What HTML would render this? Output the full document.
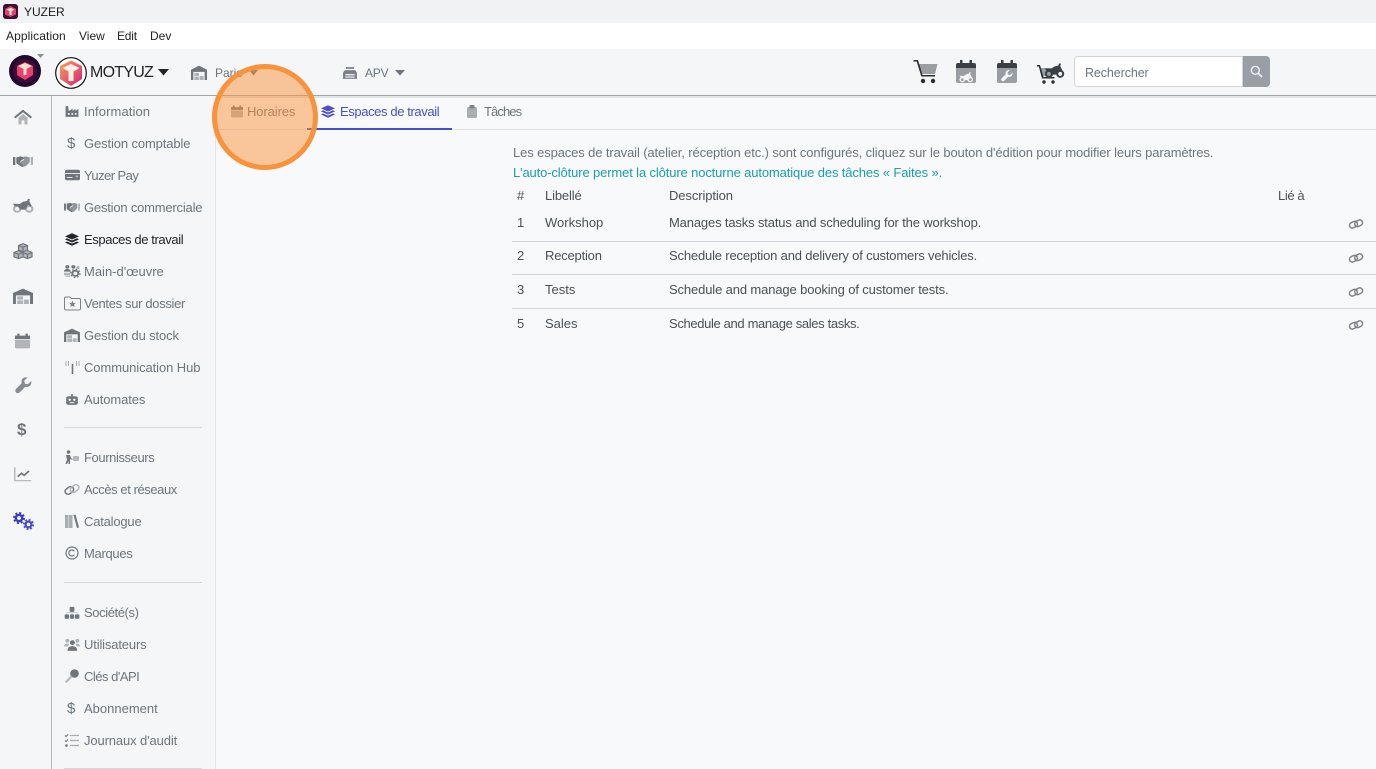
<!DOCTYPE html>
<html lang="fr"><head><meta charset="utf-8"><title>YUZER</title>
<style>
*{box-sizing:border-box}
html,body{margin:0;padding:0;width:1376px;height:769px;overflow:hidden;background:#f8f9fa;font-family:"Liberation Sans",sans-serif;font-size:13px;color:#495057}
.a{position:absolute;white-space:nowrap;line-height:18px}
.t{position:absolute;white-space:nowrap;line-height:18px;height:18px}
svg.i{position:absolute;overflow:visible;--d:#6f757b;--l:#b0b4b9;--b:#f4f6f8}
.s{color:#6c757d}
.hr{position:absolute;height:1px;background:#d5d8dc}
</style></head><body>
<svg width="0" height="0" style="position:absolute"><defs>
<g id="home"><path d="M6 13 12 7.500l6 5.500v10h-4v-6h-4v6H6z" fill="var(--l)"/><path d="M12 1 0 12l1.800 2L12 4.800 22.200 14l1.800-2z" fill="var(--d)"/></g>
<g id="hands"><path d="M0 6h2.800v12H0z" fill="var(--d)"/><path d="M21.200 6H24v12h-2.800z" fill="var(--l)"/><path d="M4 6.500 9 5l3 1 1 3-3 2-2 3 5 6-2 1-5-4-2-1.500z" fill="var(--d)"/><path d="M12 6l3-1 5 1.500V14l-5 6-2.500.5L8 15l2.500-3 3-1.500L12 6z" fill="var(--d)" opacity=".75"/></g>
<g id="moto"><circle cx="5" cy="16.500" r="3.800" fill="none" stroke="var(--l)" stroke-width="2.600"/><circle cx="19.500" cy="16.500" r="3.800" fill="none" stroke="var(--l)" stroke-width="2.600"/><path d="M0 9.500l8 .5 4-3 5-1 1-3 2.500.5-1 3 3 6-2 1-2.500-2.500-3 6.500H8.500L6 13H2z" fill="var(--d)"/></g>
<g id="cubes"><path d="M12 1l6 2.700v6.800L12 13.200 6 10.500V3.700zM6 11.500l6 2.700v6.600L6 23.500 0 20.800v-6.600zM18 11.500l6 2.700v6.600l-6 2.700-6-2.700v-6.600z" fill="var(--l)"/><path d="M12 1l6 2.700v6.800L12 13.200 6 10.500V3.700zM6 3.700l6 2.700 6-2.700M12 6.400v6.800M6 11.500l6 2.700v6.600L6 23.500 0 20.800v-6.600zM0 14.200l6 2.700 6-2.700M6 16.900v6.600M18 11.500l6 2.700v6.600l-6 2.700-6-2.700M12 14.200l6 2.700 6-2.700M18 16.900v6.600" fill="none" stroke="var(--d)" stroke-width="1.600"/></g>
<g id="ware"><path d="M0 7.500 12 1l12 6.500V24h-3.500V11h-17v13H0z" fill="var(--d)"/><path d="M5 12.500h7v5H5zM13 17.500h6V24h-6zM5 18.500h7V24H5z" fill="var(--l)"/></g>
<g id="cal"><path d="M5 1h3v3h8V1h3v3h3v5H2V4h3z" fill="var(--d)"/><path d="M2 10h20v11a2 2 0 0 1-2 2H4a2 2 0 0 1-2-2z" fill="var(--l)"/></g>
<g id="wrench"><path d="M23 6.500 18 11l-4-1-1-4 4.500-4.500C14 .5 10.500 2 9.500 5c-.5 1.500-.5 3 0 4.500L1.500 17.500a3.500 3.500 0 0 0 5 5l8-8c3.500 1 7-.5 8-3.500.5-1.500.900-3 .500-4.500z"/></g>
<g id="chart"><path d="M1 2v20h22" fill="none" stroke="var(--l)" stroke-width="1.800"/><path d="M5 16l5-5 3.500 3L20 7.500" fill="none" stroke="var(--d)" stroke-width="2.400"/></g>
<g id="layers"><path d="M12 .5 0 6.200 12 12l12-5.800z"/><path d="M3.500 9.800 0 11.700 12 17.500l12-5.800-3.500-1.900L12 13.900z"/><path d="M3.500 15.600 0 17.500 12 23.500l12-6-3.500-1.900L12 19.700z"/></g>
<g id="factory"><path d="M1 2h4.500l.8 9L13 7v4l5-4v4l5-4v15H1z" fill="var(--d)"/><path d="M5 15h3v3H5zM11 15h3v3h-3zM17 15h3v3h-3z" fill="var(--b)"/></g>
<g id="card"><rect y="3" width="24" height="18" rx="3" fill="var(--d)"/><path d="M0 8.500h24v1.500H0zM3 15.500h9v1.500H3z" fill="var(--b)"/><rect x="17" y="13" width="4" height="3" fill="var(--l)"/></g>
<g id="users"><circle cx="5" cy="6" r="3" fill="var(--l)"/><circle cx="12.500" cy="9" r="3.800" fill="var(--d)"/><circle cx="20" cy="6" r="3" fill="var(--l)"/><path d="M0 15c0-3 2-4.500 5-4.500 1 0 2 .2 2.700.7L6 15zM5 22c0-5 3-7.500 7.500-7.500S20 17 20 22zM17.500 11.200c.7-.5 1.500-.7 2.500-.7 2.500 0 4 1.500 4 4.500h-5z" fill="var(--l)"/><path d="M5.500 22c0-5 2.500-7 7-7s7 2 7 7z" fill="var(--d)"/></g>
<g id="workers"><circle cx="5" cy="5" r="3" fill="var(--d)"/><path d="M0 13c0-3 2-4.500 5-4.500S10 10 10 13z" fill="var(--d)"/><circle cx="14" cy="5" r="3" fill="var(--d)"/><path d="M0 15h9v4H0zM2 20h7v2H2z" fill="var(--l)"/><circle cx="17" cy="16" r="4.500" fill="none" stroke="var(--d)" stroke-width="3"/><circle cx="17" cy="16" r="7" fill="none" stroke="var(--d)" stroke-width="2" stroke-dasharray="2.600 2.900"/><circle cx="21" cy="6" r="2.500" fill="var(--l)"/></g>
<g id="robot"><rect x="2" y="6" width="20" height="16" rx="4" fill="var(--d)"/><rect x="10.500" y="2" width="3" height="4" fill="var(--d)"/><circle cx="8" cy="12.500" r="2.200" fill="var(--b)"/><circle cx="16" cy="12.500" r="2.200" fill="var(--b)"/><rect x="8" y="17" width="8" height="1.800" fill="var(--b)"/></g>
<g id="link"><g fill="none" stroke-width="2.500"><rect x=".5" y="8.500" width="14" height="9.500" rx="4.700" transform="rotate(-28 7.500 13)" stroke="var(--d)"/><rect x="9.500" y="6" width="14" height="9.500" rx="4.700" transform="rotate(-28 16.500 10.700)" stroke="var(--d)"/></g></g>
<g id="link2"><g fill="none" stroke-width="2.200"><rect x="1" y="9" width="14" height="9" rx="4.500" transform="rotate(-40 8 13.500)" stroke="var(--d)"/><rect x="9" y="6" width="14" height="9" rx="4.500" transform="rotate(-40 16 10.500)" stroke="var(--l)"/></g></g>
<g id="sitemap"><rect x="8.500" y="3" width="7" height="8" rx="1.500" fill="var(--d)"/><rect x="1" y="15" width="6.500" height="7" rx="1.500" fill="var(--d)"/><rect x="8.800" y="15" width="6.500" height="7" rx="1.500" fill="var(--d)"/><rect x="16.500" y="15" width="6.500" height="7" rx="1.500" fill="var(--d)"/><path d="M4 14v-1.500h16V14M12 11v3" fill="none" stroke="var(--l)"/></g>
<g id="cog"><circle cx="12" cy="12" r="6.300" fill="none" stroke="currentColor" stroke-width="5"/><circle cx="12" cy="12" r="10" fill="none" stroke="currentColor" stroke-width="4" stroke-dasharray="4.200 3.650"/></g>
</defs></svg>

<!-- title bar -->
<div class="a" style="left:0;top:0;width:1376px;height:23px;background:#f0f2f4"></div>
<svg class="i" style="left:3px;top:4px" width="15" height="15" viewBox="0 0 15 15"><rect width="15" height="15" rx="3" fill="#3a1230"/><path d="M7.500 2 13 5v5.500L7.500 13 2 10.500V5z" fill="#e0416f"/><path d="M3.500 5.500 7.500 4l4 1.500-3 1.500v4h-2V7z" fill="#fbe6d6"/></svg>
<div class="t" style="left:24px;top:3px;color:#1c1c1c;font-size:12px">YUZER</div>
<!-- menu -->
<div class="a" style="left:0;top:23px;width:1376px;height:26px;background:#fff"></div>
<div class="t" style="left:6px;top:27px;color:#222;font-size:12px;letter-spacing:.1px">Application</div>
<div class="t" style="left:79px;top:27px;color:#222;font-size:12px">View</div>
<div class="t" style="left:117px;top:27px;color:#222;font-size:12px;letter-spacing:-.2px">Edit</div>
<div class="t" style="left:150px;top:27px;color:#222;font-size:12px">Dev</div>
<!-- header -->
<div class="a" style="left:0;top:49px;width:1376px;height:47px;background:#f4f6f8;border-bottom:1px solid #a3a6a9"></div>
<div class="a" style="left:0;top:96px;width:1376px;height:2px;background:#e3e4e6"></div>
<!-- rail + sidebar -->
<div class="a" style="left:0;top:96px;width:52px;height:673px;background:#f4f6f8"></div>
<div class="a" style="left:51px;top:96px;width:165px;height:673px;background:#f4f6f8;border-left:1px solid #b5b8bb;border-right:1px solid #e3e5e8"></div>

<!-- logos -->
<svg class="i" style="left:9px;top:55px" width="33" height="33" viewBox="0 0 33 33"><circle cx="16" cy="16" r="16" fill="#21082c"/><circle cx="16" cy="16" r="12" fill="#3b0d3a"/><path d="M16 7l8 4v9l-8 5-8-5v-9z" fill="#e8416d"/><path d="M9 11l7-3 7 3-5.500 3v6h-3v-6z" fill="#fde3cf"/></svg>
<svg class="i" style="left:37px;top:54px" width="7" height="5"><path d="M0 0h7L3.500 4z" fill="#8a8f94"/></svg>
<svg class="i" style="left:55px;top:57px" width="33" height="33" viewBox="0 0 33 33"><defs><linearGradient id="g" x1="0" y1="0" x2="1" y2="1"><stop offset="0" stop-color="#f7a35c"/><stop offset="1" stop-color="#d81f78"/></linearGradient></defs><circle cx="16" cy="16" r="15.300" fill="#fff" stroke="#111" stroke-width="1.200"/><path d="M16 3.500 27 9v13l-11 7-11-7V9z" fill="url(#g)"/><path d="M7.500 11 16 7l8.500 4-6 3.500V24h-5v-9.500z" fill="#fff0e6"/></svg>
<div class="t" style="left:90px;top:63px;height:20px;line-height:20px;font-size:16px;color:#212529;letter-spacing:-.75px">MOTYUZ</div>
<svg class="i" style="left:158px;top:69px" width="11" height="7"><path d="M0 0h11L5.500 6.500z" fill="#212529"/></svg>
<svg class="i" style="left:191px;top:65px" width="16" height="15" viewBox="0 0 24 24" preserveAspectRatio="none"><use href="#ware"/></svg>
<div class="t s" style="left:215px;top:64px;font-size:12px">Paris</div>
<svg class="i" style="left:249px;top:70px" width="9" height="6"><path d="M0 0h9L4.500 5.500z" fill="#6c757d"/></svg>
<svg class="i" style="left:343px;top:66px;fill:#7b8187" width="14" height="14" viewBox="0 0 24 24"><path d="M5 2h14v3H5zM3 7h18l3 5v10H0V12zM4 14v2h16v-2zM4 18v2h16v-2z"/></svg>
<div class="t s" style="left:365px;top:64px;font-size:12px;letter-spacing:-.2px">APV</div>
<svg class="i" style="left:395px;top:70px" width="10" height="6"><path d="M0 0h10L5 5.500z" fill="#6c757d"/></svg>

<!-- top right icons -->
<svg class="i" style="left:913px;top:59px" width="25" height="25" viewBox="0 0 24 25"><path d="M4.500 5H24l-2.500 10H8z" fill="#9a9ea3"/><path d="M0 1h4.500l4.500 15h12.500v1.500H7.800L3.200 2.500H0z" fill="#2b2f33"/><circle cx="9.500" cy="22" r="2.200" fill="#2b2f33"/><circle cx="19.500" cy="22" r="2.200" fill="#2b2f33"/></svg>
<svg class="i" style="left:956px;top:60px" width="20" height="23" viewBox="0 0 20 23"><path d="M0 8h20v13a2 2 0 0 1-2 2H2a2 2 0 0 1-2-2z" fill="#9a9ea3"/><path d="M4 0h2.500v3h7V0H16v3h2a2 2 0 0 1 2 2v3H0V5a2 2 0 0 1 2-2h2z" fill="#3a3f44"/><g transform="translate(3.500 10.500) scale(.55)" style="--d:#f4f6f8;--l:#f4f6f8"><use href="#moto"/></g></svg>
<svg class="i" style="left:997px;top:60px" width="20" height="23" viewBox="0 0 20 23"><path d="M0 8h20v13a2 2 0 0 1-2 2H2a2 2 0 0 1-2-2z" fill="#9a9ea3"/><path d="M4 0h2.500v3h7V0H16v3h2a2 2 0 0 1 2 2v3H0V5a2 2 0 0 1 2-2h2z" fill="#3a3f44"/><g transform="translate(4 9.500) scale(.5)" fill="#f4f6f8"><use href="#wrench"/></g></svg>
<svg class="i" style="left:1037px;top:62px" width="27" height="22" viewBox="0 0 27 22"><path d="M3 6h15l-2 8H6z" fill="#9a9ea3"/><path d="M0 3h3l3.500 12h11v1.500H5L1.800 4.500H0z" fill="#2b2f33"/><circle cx="7" cy="20" r="1.700" fill="#2b2f33"/><circle cx="16" cy="20" r="1.700" fill="#2b2f33"/><g transform="translate(8 -1) scale(.78)" style="--d:#3a3f44;--l:#3a3f44"><use href="#moto"/></g></svg>
<div class="a" style="left:1074px;top:56px;width:169px;height:31px;background:#fff;border:1px solid #ced4da;border-radius:4px 0 0 4px"></div>
<div class="t" style="left:1085px;top:64px;color:#6c757d;font-size:12.500px;letter-spacing:-.1px">Rechercher</div>
<div class="a" style="left:1243px;top:56px;width:27px;height:31px;background:#9a9fa5;border-radius:0 4px 4px 0"></div>
<svg class="i" style="left:1250px;top:65px" width="13" height="13" viewBox="0 0 13 13"><circle cx="5.300" cy="5.300" r="4" fill="none" stroke="#eef0f2" stroke-width="1.400"/><path d="M8.300 8.300 12 12" stroke="#eef0f2" stroke-width="1.700"/></svg>

<!-- rail icons -->
<svg class="i" style="left:14px;top:109px" width="18" height="16" viewBox="0 0 24 24" preserveAspectRatio="none"><use href="#home"/></svg>
<svg class="i" style="left:13px;top:153px" width="20" height="16" viewBox="0 0 24 24" preserveAspectRatio="none"><use href="#hands"/></svg>
<svg class="i" style="left:13px;top:198px" width="20" height="15" viewBox="0 2 24 20" preserveAspectRatio="none"><use href="#moto"/></svg>
<svg class="i" style="left:14px;top:243px" width="18" height="16" viewBox="0 0 24 24" preserveAspectRatio="none"><use href="#cubes"/></svg>
<svg class="i" style="left:13px;top:288px" width="20" height="16" viewBox="0 0 24 24" preserveAspectRatio="none"><use href="#ware"/></svg>
<svg class="i" style="left:15px;top:333px" width="15" height="16" viewBox="2 0 20 24" preserveAspectRatio="none"><use href="#cal"/></svg>
<svg class="i" style="left:15px;top:376px;fill:#868c92" width="17" height="18" viewBox="0 0 24 24"><use href="#wrench"/></svg>
<div class="t" style="left:17px;top:420px;font-size:17px;height:20px;line-height:20px;color:#6f757b;font-weight:bold">$</div>
<svg class="i" style="left:14px;top:466px" width="18" height="16" viewBox="0 0 24 24" preserveAspectRatio="none"><use href="#chart"/></svg>
<svg class="i" style="left:13px;top:512px;color:#3b3fc0" width="12" height="12" viewBox="0 0 24 24"><use href="#cog"/></svg>
<svg class="i" style="left:23px;top:519px;color:#4a4fc9" width="11" height="11" viewBox="0 0 24 24"><use href="#cog"/></svg>

<!-- sidebar icons -->
<svg class="i" style="left:65px;top:105px" width="14" height="13" viewBox="0 0 24 24" preserveAspectRatio="none"><use href="#factory"/></svg>
<div class="t s" style="left:67px;top:135px;font-size:15px">$</div>
<svg class="i" style="left:65px;top:168px" width="15" height="14" viewBox="0 0 24 24" preserveAspectRatio="none"><use href="#card"/></svg>
<svg class="i" style="left:64px;top:200px" width="16" height="14" viewBox="0 0 24 24" preserveAspectRatio="none"><use href="#hands"/></svg>
<svg class="i" style="left:65px;top:233px;fill:#212529" width="14" height="13" viewBox="0 0 24 24" preserveAspectRatio="none"><use href="#layers"/></svg>
<svg class="i" style="left:64px;top:264px" width="16" height="14" viewBox="0 0 24 24" preserveAspectRatio="none"><use href="#workers"/></svg>
<svg class="i" style="left:64px;top:296px" width="17" height="15" viewBox="0 0 17 15"><path d="M.5 2.500a1.500 1.500 0 0 1 1.500-1.500h4l1.500 1.500H15a1.500 1.500 0 0 1 1.500 1.500v8.500a1.500 1.500 0 0 1-1.500 1.500H2a1.500 1.500 0 0 1-1.500-1.500z" fill="none" stroke="#7b8187"/><path d="M8.500 4.800l1 2.200 2.300.2-1.800 1.500.6 2.300-2.100-1.200-2.100 1.200.6-2.300-1.800-1.500 2.300-.2z" fill="#7b8187"/></svg>
<svg class="i" style="left:64px;top:328px" width="16" height="14" viewBox="0 0 24 24" preserveAspectRatio="none"><use href="#ware"/></svg>
<svg class="i" style="left:65px;top:361px" width="15" height="13" viewBox="0 0 15 13"><path d="M6.700 3h1.600v10H6.700z" fill="#6f757b"/><path d="M.5 0h1v5h-1zM3 0h1v5H3zM11 0h1v5h-1zM13.500 0h1v5h-1z" fill="#a8adb2"/></svg>
<svg class="i" style="left:65px;top:393px" width="14" height="13" viewBox="0 0 24 24" preserveAspectRatio="none"><use href="#robot"/></svg>

<svg class="i" style="left:65px;top:450px" width="14" height="14" viewBox="0 0 14 14"><circle cx="3.500" cy="2" r="1.800" fill="#6f757b"/><path d="M1 5h4l1 3 1.500 1v1L5 9v5H3.500v-3L2 14H.5L2 9.500z" fill="#6f757b"/><rect x="8" y="6" width="6" height="5" rx="1" fill="#b4b8bd"/></svg>
<svg class="i" style="left:64px;top:482px" width="16" height="15" viewBox="0 0 24 24" preserveAspectRatio="none"><use href="#link2"/></svg>
<svg class="i" style="left:65px;top:514px" width="14" height="14" viewBox="0 0 14 14"><path d="M0 1h3.500v13H0zM4 1h3.500v13H4z" fill="#a8adb2"/><path d="M8.500 1l2-.5 3.500 13-2 .5z" fill="#6f757b"/></svg>
<svg class="i" style="left:65px;top:546px" width="14" height="14" viewBox="0 0 14 14"><circle cx="7" cy="7" r="6" fill="none" stroke="#6f757b" stroke-width="1.200"/><path d="M9.300 5.300A3 3 0 1 0 9.300 8.700" fill="none" stroke="#6f757b" stroke-width="1.200"/></svg>

<svg class="i" style="left:64px;top:605px" width="16" height="15" viewBox="0 0 24 24" preserveAspectRatio="none"><use href="#sitemap"/></svg>
<svg class="i" style="left:64px;top:637px" width="16" height="15" viewBox="0 0 24 24" preserveAspectRatio="none"><use href="#users"/></svg>
<svg class="i" style="left:65px;top:669px" width="14" height="14" viewBox="0 0 14 14"><circle cx="9.500" cy="4.500" r="4.300" fill="#6f757b"/><path d="M6 6.500 0 12.500 1.500 14l6-6z" fill="#b4b8bd"/></svg>
<div class="t s" style="left:67px;top:700px;font-size:15px">$</div>
<svg class="i" style="left:65px;top:734px" width="14" height="13" viewBox="0 0 14 13"><path d="M5 1.500h9M5 6.500h9M5 11.500h9" stroke="#a8adb2" stroke-width="1.300"/><path d="M0 1.500l1 1 2-2M0 6.500l1 1 2-2" stroke="#6f757b" fill="none"/><circle cx="1.500" cy="11.500" r="1.300" fill="#6f757b"/></svg>

<!-- sidebar text -->
<div class="t s" style="left:84px;top:103px;letter-spacing:.1px">Information</div>
<div class="t s" style="left:84px;top:135px;letter-spacing:-.12px">Gestion comptable</div>
<div class="t s" style="left:84px;top:167px;letter-spacing:-.55px">Yuzer Pay</div>
<div class="t s" style="left:84px;top:199px;letter-spacing:-.2px">Gestion commerciale</div>
<div class="t" style="left:84px;top:231px;color:#212529;letter-spacing:-.39px">Espaces de travail</div>
<div class="t s" style="left:84px;top:263px">Main-d'œuvre</div>
<div class="t s" style="left:84px;top:295px;letter-spacing:-.33px">Ventes sur dossier</div>
<div class="t s" style="left:84px;top:327px;letter-spacing:-.12px">Gestion du stock</div>
<div class="t s" style="left:84px;top:359px;letter-spacing:-.08px">Communication Hub</div>
<div class="t s" style="left:84px;top:391px;letter-spacing:-.1px">Automates</div>
<div class="hr" style="left:64px;top:427px;width:138px"></div>
<div class="t s" style="left:84px;top:449px;letter-spacing:-.4px">Fournisseurs</div>
<div class="t s" style="left:84px;top:481px;letter-spacing:-.43px">Accès et réseaux</div>
<div class="t s" style="left:84px;top:513px;letter-spacing:-.2px">Catalogue</div>
<div class="t s" style="left:84px;top:545px;letter-spacing:-.3px">Marques</div>
<div class="hr" style="left:64px;top:582px;width:138px"></div>
<div class="t s" style="left:84px;top:604px;letter-spacing:-.4px">Société(s)</div>
<div class="t s" style="left:84px;top:636px;letter-spacing:-.15px">Utilisateurs</div>
<div class="t s" style="left:84px;top:668px;letter-spacing:-.5px">Clés d'API</div>
<div class="t s" style="left:84px;top:700px">Abonnement</div>
<div class="t s" style="left:84px;top:732px;letter-spacing:-.12px">Journaux d'audit</div>
<div class="hr" style="left:64px;top:768px;width:138px"></div>

<!-- tabs -->
<div class="a" style="left:216px;top:129px;width:1160px;height:1px;background:#dee2e6"></div>
<svg class="i" style="left:231px;top:105px" width="12" height="13" viewBox="2 0 20 24" preserveAspectRatio="none"><use href="#cal"/></svg>
<div class="t s" style="left:247px;top:103px;letter-spacing:-.1px">Horaires</div>
<svg class="i" style="left:321px;top:105px;fill:#4a4fc9" width="14" height="13" viewBox="0 0 24 24" preserveAspectRatio="none"><use href="#layers"/></svg>
<div class="t" style="left:340px;top:103px;color:#4a4fc9;letter-spacing:-.39px">Espaces de travail</div>
<div class="a" style="left:307px;top:128px;width:145px;height:2px;background:#4a4fc9"></div>
<svg class="i" style="left:467px;top:105px" width="10" height="13" viewBox="0 0 10 13"><rect y="2" width="10" height="11" rx="1.500" fill="#a8adb2"/><rect x="2.500" width="5" height="3.500" rx="1" fill="#7b8187"/></svg>
<div class="t s" style="left:484px;top:103px;letter-spacing:-.9px">Tâches</div>

<!-- content -->
<div class="t s" style="left:513px;top:144px;letter-spacing:-.12px">Les espaces de travail (atelier, réception etc.) sont configurés, cliquez sur le bouton d'édition pour modifier leurs paramètres.</div>
<div class="t" style="left:513px;top:164px;color:#1a9ea8;letter-spacing:-.13px">L'auto-clôture permet la clôture nocturne automatique des tâches « Faites ».</div>

<div class="t" style="left:517px;top:187px">#</div>
<div class="t" style="left:545px;top:187px;letter-spacing:-.15px">Libellé</div>
<div class="t" style="left:669px;top:187px;letter-spacing:-.1px">Description</div>
<div class="t" style="left:1278px;top:187px;letter-spacing:-.4px">Lié à</div>

<div class="t" style="left:517px;top:214px">1</div>
<div class="t" style="left:545px;top:214px">Workshop</div>
<div class="t" style="left:669px;top:214px;letter-spacing:-.15px">Manages tasks status and scheduling for the workshop.</div>
<div class="a" style="left:512px;top:241px;width:864px;height:1px;background:#ced4da"></div>
<div class="t" style="left:517px;top:247px">2</div>
<div class="t" style="left:545px;top:247px;letter-spacing:-.2px">Reception</div>
<div class="t" style="left:669px;top:247px;letter-spacing:-.17px">Schedule reception and delivery of customers vehicles.</div>
<div class="a" style="left:512px;top:274px;width:864px;height:1px;background:#ced4da"></div>
<div class="t" style="left:517px;top:281px">3</div>
<div class="t" style="left:545px;top:281px">Tests</div>
<div class="t" style="left:669px;top:281px;letter-spacing:-.13px">Schedule and manage booking of customer tests.</div>
<div class="a" style="left:512px;top:308px;width:864px;height:1px;background:#ced4da"></div>
<div class="t" style="left:517px;top:315px">5</div>
<div class="t" style="left:545px;top:315px">Sales</div>
<div class="t" style="left:669px;top:315px;letter-spacing:-.35px">Schedule and manage sales tasks.</div>

<svg class="i" style="left:1349px;top:217px;--d:#7b8187" width="14" height="14" viewBox="0 0 24 24"><use href="#link"/></svg>
<svg class="i" style="left:1349px;top:251px;--d:#7b8187" width="14" height="14" viewBox="0 0 24 24"><use href="#link"/></svg>
<svg class="i" style="left:1349px;top:285px;--d:#7b8187" width="14" height="14" viewBox="0 0 24 24"><use href="#link"/></svg>
<svg class="i" style="left:1349px;top:318px;--d:#7b8187" width="14" height="14" viewBox="0 0 24 24"><use href="#link"/></svg>

<!-- highlight circle -->
<div class="a" style="left:212px;top:64px;width:106px;height:106px;border-radius:50%;background:rgba(249,146,60,.5);border:5px solid #f8933c"></div>
</body></html>
